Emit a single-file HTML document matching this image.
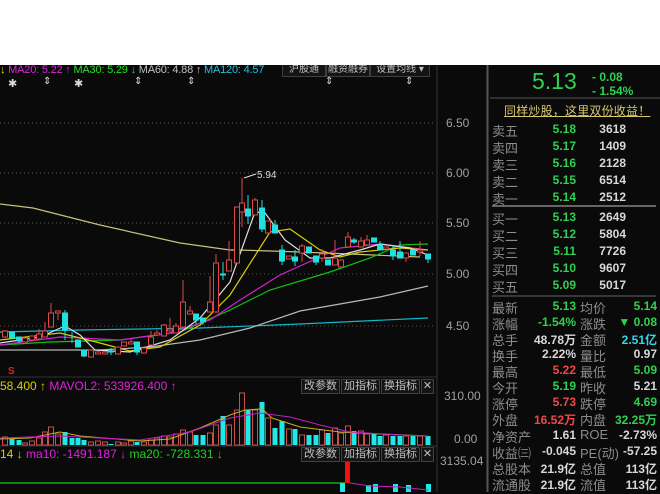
<!DOCTYPE html>
<html><head><meta charset="utf-8"><style>
body{margin:0;width:660px;height:492px;overflow:hidden;background:#0a0a0a;font-family:"Liberation Sans","Noto Sans CJK SC",sans-serif;position:relative}
.a{position:absolute;white-space:nowrap}
.top{position:absolute;left:0;top:0;width:660px;height:65px;background:#fff;z-index:5}
.ax{position:absolute;left:446px;color:#a0a0a0;font-size:12px}
.btn{position:absolute;height:13px;border:1px solid #404040;background:#141414;color:#c0c0c0;font-size:11px;line-height:13px;text-align:center;white-space:nowrap;overflow:hidden}
.l{position:absolute;left:492px;color:#8c8c8c;font-size:13px}
.l2{position:absolute;left:580px;color:#8c8c8c;font-size:13px}
.v{position:absolute;font-size:12px;font-weight:bold;text-align:right}
.g{color:#30d050}.w{color:#d8d8d8}.r{color:#f04848}.c{color:#30d8e8}
</style></head><body>
<div class="top"></div>
<div class="a" style="left:0;top:63px;font-size:11px;line-height:14px;letter-spacing:-0.2px"><span style="color:#e0e000">↓</span> <span style="color:#e020e0">MA20: 5.22 ↑</span> <span style="color:#20e020">MA30: 5.29 ↓</span> <span style="color:#c0c0c0">MA60: 4.88 ↑</span> <span style="color:#20c0e0">MA120: 4.57</span></div>
<div class="btn" style="left:282px;top:62px;width:42px;font-size:10px">沪股通</div>
<div class="btn" style="left:326px;top:62px;width:42px;font-size:10px">融资融券</div>
<div class="btn" style="left:370px;top:62px;width:58px;font-size:10px">设置均线 ▾</div>
<div class="a" style="left:8px;top:77px;color:#ddd;font-size:11px">✱</div>
<div class="a" style="left:74px;top:77px;color:#ddd;font-size:11px">✱</div>
<div class="a" style="left:43px;top:76px;color:#ddd;font-size:10px">⇕</div>
<div class="a" style="left:134px;top:76px;color:#ddd;font-size:10px">⇕</div>
<div class="a" style="left:187px;top:76px;color:#ddd;font-size:10px">⇕</div>
<div class="a" style="left:325px;top:76px;color:#ddd;font-size:10px">⇕</div>
<div class="a" style="left:405px;top:76px;color:#ddd;font-size:10px">⇕</div>

<svg class="a" style="left:0;top:0" width="660" height="492">
<g stroke="#555" stroke-dasharray="1,3">
<line x1="0" y1="123" x2="436" y2="123"/><line x1="0" y1="173" x2="436" y2="173"/><line x1="0" y1="223" x2="436" y2="223"/><line x1="0" y1="274" x2="436" y2="274"/><line x1="0" y1="326" x2="436" y2="326"/>
</g>
<line x1="437" y1="65" x2="437" y2="492" stroke="#333"/>
<line x1="487.5" y1="65" x2="487.5" y2="492" stroke="#555" stroke-width="2"/>
<line x1="0" y1="377" x2="437" y2="377" stroke="#333"/>
<line x1="0" y1="446" x2="437" y2="446" stroke="#333"/>
<g fill="none" stroke-width="1.2">
<polyline stroke="#c8c080" points="0,204 33,208 100,225 180,243 230,250 238,250 270,251 300,252 350,254 420,257"/>
<polyline stroke="#10b8c8" points="0,332 80,330 200,328 300,324 428,318"/>
<polyline stroke="#b8b8b8" points="0,350 100,350 150,347 200,340 250,328 300,311 380,297 428,286"/>
<polyline stroke="#10c010" points="0,345 50,342 120,340 180,332 230,310 270,290 330,272 370,258 400,245 428,244"/>
<polyline stroke="#d020d0" points="0,345 60,337 120,340 170,333 210,320 240,300 280,275 340,248 380,244 428,250"/>
<polyline stroke="#d8d000" points="0,340 60,333 100,343 130,351 160,347 200,325 230,295 270,232 290,229 320,250 340,257 360,252 400,248 428,250"/>
<polyline stroke="#e0e0e0" points="0,343 40,337 65,326 80,335 95,350 130,352 170,340 200,318 230,282 255,212 265,213 285,240 310,258 330,258 360,250 380,244 410,248 428,255"/>
</g>
<g stroke="#e04848" fill="#0a0a0a">
<path d="M5 330V338M25 338V342M32 336V340M39 329V339M45 322V337M51 303V327M58 311V320M91 350V357M98 351V354M105 352V354M118 347V354M124 342V346M131 339V344M144 348V353M151 331V345M157 330V336M164 324V336M170 318V331M176 323V333M183 280V327M190 306V314M210 276V312M216 254V312M229 241V271M237 207V263M242 178V227M255 198V215M268 221V233M289 256V259M302 244V262M322 249V262M335 240V265M341 260V267M348 232V247M361 237V247M367 235V245M386 247V249M406 253V262M420 241V256"/>
<rect x="2.5" y="331" width="5" height="6"/><rect x="22.5" y="338" width="5" height="4"/><rect x="29.5" y="336" width="5" height="4"/><rect x="36.5" y="334" width="5" height="5"/><rect x="42.5" y="331" width="5" height="6"/><rect x="48.5" y="313" width="5" height="14"/><rect x="55.5" y="311" width="5" height="2"/><rect x="88.5" y="350" width="5" height="7"/><rect x="95.5" y="352" width="5" height="2"/><rect x="102.5" y="352" width="5" height="2"/><rect x="115.5" y="347" width="5" height="7"/><rect x="121.5" y="342" width="5" height="4"/><rect x="128.5" y="342" width="5" height="2"/><rect x="141.5" y="348" width="5" height="5"/><rect x="148.5" y="337" width="5" height="8"/><rect x="154.5" y="333" width="5" height="2"/><rect x="161.5" y="325" width="5" height="11"/><rect x="167.5" y="329" width="5" height="2"/><rect x="173.5" y="326" width="5" height="7"/><rect x="180.5" y="302" width="5" height="25"/><rect x="187.5" y="311" width="5" height="3"/><rect x="207.5" y="302" width="5" height="10"/><rect x="213.5" y="263" width="5" height="49"/><rect x="226.5" y="260" width="5" height="11"/><rect x="234.5" y="207" width="5" height="56"/><rect x="239.5" y="203" width="5" height="9"/><rect x="252.5" y="200" width="5" height="15"/><rect x="265.5" y="221" width="5" height="12"/><rect x="286.5" y="256" width="5" height="3"/><rect x="299.5" y="246" width="5" height="7"/><rect x="319.5" y="254" width="5" height="4"/><rect x="332.5" y="258" width="5" height="7"/><rect x="338.5" y="260" width="5" height="7"/><rect x="345.5" y="237" width="5" height="10"/><rect x="358.5" y="241" width="5" height="6"/><rect x="364.5" y="240" width="5" height="5"/><rect x="383.5" y="247" width="5" height="2"/><rect x="403.5" y="253" width="5" height="5"/><rect x="417.5" y="250" width="5" height="2"/>
</g>
<g stroke="#20e0e0" fill="#20e0e0">
<path d="M12 332V338M19 337V343M65 310V340M72 332V343M78 340V347M84 350V357M111 348V355M137 342V355M196 314V324M203 318V325M223 262V280M248 195V224M262 200V232M275 220V233M282 245V265M295 250V266M309 247V253M316 256V265M328 260V265M354 238V244M374 238V242M380 241V250M393 246V260M400 241V258M413 250V255M428 254V263"/>
<rect x="9.5" y="332" width="5" height="6"/><rect x="16.5" y="337" width="5" height="4"/><rect x="62.5" y="313" width="5" height="17"/><rect x="75.5" y="340" width="5" height="7"/><rect x="81.5" y="350" width="5" height="6"/><rect x="108.5" y="351" width="5" height="1"/><rect x="134.5" y="342" width="5" height="10"/><rect x="193.5" y="314" width="5" height="6"/><rect x="200.5" y="318" width="5" height="4"/><rect x="220.5" y="274" width="5" height="1"/><rect x="245.5" y="209" width="5" height="7"/><rect x="259.5" y="208" width="5" height="21"/><rect x="272.5" y="225" width="5" height="8"/><rect x="279.5" y="250" width="5" height="11"/><rect x="292.5" y="257" width="5" height="4"/><rect x="306.5" y="247" width="5" height="6"/><rect x="313.5" y="256" width="5" height="6"/><rect x="325.5" y="260" width="5" height="5"/><rect x="351.5" y="240" width="5" height="2"/><rect x="371.5" y="238" width="5" height="4"/><rect x="377.5" y="245" width="5" height="5"/><rect x="390.5" y="250" width="5" height="6"/><rect x="397.5" y="252" width="5" height="6"/><rect x="410.5" y="250" width="5" height="5"/><rect x="425.5" y="254" width="5" height="5"/>
</g>
<line x1="244" y1="178" x2="256" y2="174" stroke="#ddd"/>
<text x="257" y="178" fill="#ddd" font-size="10" font-family="Liberation Sans">5.94</text>
<text x="8" y="374" fill="#e02020" font-size="10" font-weight="bold" font-family="Liberation Sans">S</text>
<g stroke="#c85050" fill="#0a0a0a">
<rect x="2.5" y="437" width="5" height="8"/><rect x="22.5" y="443" width="5" height="2"/><rect x="29.5" y="441" width="5" height="4"/><rect x="36.5" y="438" width="5" height="7"/><rect x="42.5" y="432" width="5" height="13"/><rect x="48.5" y="427" width="5" height="18"/><rect x="55.5" y="434" width="5" height="11"/><rect x="88.5" y="442" width="5" height="3"/><rect x="95.5" y="441" width="5" height="4"/><rect x="102.5" y="442" width="5" height="3"/><rect x="115.5" y="442" width="5" height="3"/><rect x="121.5" y="443" width="5" height="2"/><rect x="128.5" y="441" width="5" height="4"/><rect x="141.5" y="442" width="5" height="3"/><rect x="148.5" y="440" width="5" height="5"/><rect x="154.5" y="438" width="5" height="7"/><rect x="161.5" y="436" width="5" height="9"/><rect x="167.5" y="437" width="5" height="8"/><rect x="173.5" y="434" width="5" height="11"/><rect x="180.5" y="430" width="5" height="15"/><rect x="187.5" y="432" width="5" height="13"/><rect x="207.5" y="433" width="5" height="12"/><rect x="213.5" y="425" width="5" height="20"/><rect x="226.5" y="425" width="5" height="20"/><rect x="234.5" y="410" width="5" height="35"/><rect x="239.5" y="393" width="5" height="52"/><rect x="252.5" y="410" width="5" height="35"/><rect x="265.5" y="418" width="5" height="27"/><rect x="286.5" y="429" width="5" height="16"/><rect x="299.5" y="435" width="5" height="10"/><rect x="319.5" y="430" width="5" height="15"/><rect x="332.5" y="428" width="5" height="17"/><rect x="338.5" y="433" width="5" height="12"/><rect x="345.5" y="426" width="5" height="19"/><rect x="358.5" y="431" width="5" height="14"/><rect x="364.5" y="434" width="5" height="11"/><rect x="383.5" y="435" width="5" height="10"/><rect x="403.5" y="436" width="5" height="9"/><rect x="417.5" y="436" width="5" height="9"/>
</g>
<g fill="#20e8e8">
<rect x="9.5" y="439" width="5" height="6"/><rect x="16.5" y="440" width="5" height="5"/><rect x="62.5" y="432" width="5" height="13"/><rect x="69.5" y="438" width="5" height="7"/><rect x="75.5" y="438" width="5" height="7"/><rect x="81.5" y="440" width="5" height="5"/><rect x="108.5" y="444" width="5" height="1"/><rect x="134.5" y="442" width="5" height="3"/><rect x="193.5" y="435" width="5" height="10"/><rect x="200.5" y="435" width="5" height="10"/><rect x="220.5" y="416" width="5" height="29"/><rect x="245.5" y="410" width="5" height="35"/><rect x="259.5" y="402" width="5" height="43"/><rect x="272.5" y="428" width="5" height="17"/><rect x="279.5" y="421" width="5" height="24"/><rect x="292.5" y="429" width="5" height="16"/><rect x="306.5" y="435" width="5" height="10"/><rect x="313.5" y="435" width="5" height="10"/><rect x="325.5" y="433" width="5" height="12"/><rect x="351.5" y="431" width="5" height="14"/><rect x="371.5" y="433" width="5" height="12"/><rect x="377.5" y="436" width="5" height="9"/><rect x="390.5" y="436" width="5" height="9"/><rect x="397.5" y="436" width="5" height="9"/><rect x="410.5" y="436" width="5" height="9"/><rect x="425.5" y="436" width="5" height="9"/>
</g>
<g fill="none" stroke-width="1.1">
<polyline stroke="#c0b020" points="0,439 30,438 60,432 80,436 140,441 170,439 200,428 230,415 245,410 262,409 272,418 300,427 340,432 380,434 428,436"/>
<polyline stroke="#c020c0" points="0,438 60,436 140,440 190,432 230,418 260,413 290,417 320,425 350,432 400,435 428,436"/>
</g>
<line x1="0" y1="483" x2="345" y2="483" stroke="#10b010" stroke-width="1.5"/>
<rect x="345" y="461" width="5" height="22" fill="#f01010"/>
<g fill="#20e8e8"><rect x="340" y="483" width="5" height="9"/><rect x="366" y="485" width="5" height="7"/><rect x="373" y="484" width="5" height="8"/><rect x="393" y="484" width="5" height="8"/><rect x="406" y="485" width="5" height="7"/><rect x="426" y="484" width="5" height="8"/></g>
<polyline fill="none" stroke="#c020c0" points="350,483 370,486 400,487 428,490"/>
<line x1="490" y1="98" x2="660" y2="98" stroke="#555"/>
<line x1="492" y1="206" x2="656" y2="206" stroke="#666" stroke-width="2"/>
<line x1="492" y1="296" x2="656" y2="296" stroke="#666"/>
</svg>

<div class="ax" style="top:116px">6.50</div>
<div class="ax" style="top:166px">6.00</div>
<div class="ax" style="top:216px">5.50</div>
<div class="ax" style="top:267px">5.00</div>
<div class="ax" style="top:319px">4.50</div>
<div class="ax" style="top:389px;left:444px">310.00</div>
<div class="ax" style="top:432px;left:454px">0.00</div>
<div class="ax" style="top:454px;left:440px">3135.04</div>

<div class="a" style="left:0;top:379px;font-size:12px"><span style="color:#d8d000">58.400 ↑</span> <span style="color:#e020e0">MAVOL2: 533926.400 ↑</span></div>
<div class="btn" style="left:301px;top:379px;width:37px">改参数</div>
<div class="btn" style="left:341px;top:379px;width:37px">加指标</div>
<div class="btn" style="left:381px;top:379px;width:37px">换指标</div>
<div class="btn" style="left:421px;top:379px;width:11px">✕</div>
<div class="a" style="left:0;top:447px;font-size:12px"><span style="color:#d8d000">14 ↓</span> <span style="color:#e020e0">ma10: -1491.187 ↓</span> <span style="color:#20d020">ma20: -728.331 ↓</span></div>
<div class="btn" style="left:301px;top:447px;width:37px">改参数</div>
<div class="btn" style="left:341px;top:447px;width:37px">加指标</div>
<div class="btn" style="left:381px;top:447px;width:37px">换指标</div>
<div class="btn" style="left:421px;top:447px;width:11px">✕</div>

<div class="a g" style="left:532px;top:68px;font-size:23px">5.13</div>
<div class="a g" style="left:592px;top:70px;font-size:12px;font-weight:bold">- 0.08</div>
<div class="a g" style="left:592px;top:84px;font-size:12px;font-weight:bold">- 1.54%</div>
<div class="a" style="left:504px;top:102px;font-size:12px;letter-spacing:0.2px;color:#d8c870;text-decoration:underline">同样炒股，这里双份收益！</div>

<div class="l" style="top:121px">卖五</div><div class="v g" style="left:540px;width:36px;top:122px">5.18</div><div class="v w" style="left:590px;width:36px;top:122px">3618</div>
<div class="l" style="top:138px">卖四</div><div class="v g" style="left:540px;width:36px;top:139px">5.17</div><div class="v w" style="left:590px;width:36px;top:139px">1409</div>
<div class="l" style="top:155px">卖三</div><div class="v g" style="left:540px;width:36px;top:156px">5.16</div><div class="v w" style="left:590px;width:36px;top:156px">2128</div>
<div class="l" style="top:172px">卖二</div><div class="v g" style="left:540px;width:36px;top:173px">5.15</div><div class="v w" style="left:590px;width:36px;top:173px">6514</div>
<div class="l" style="top:189px">卖一</div><div class="v g" style="left:540px;width:36px;top:190px">5.14</div><div class="v w" style="left:590px;width:36px;top:190px">2512</div>
<div class="l" style="top:209px">买一</div><div class="v g" style="left:540px;width:36px;top:210px">5.13</div><div class="v w" style="left:590px;width:36px;top:210px">2649</div>
<div class="l" style="top:226px">买二</div><div class="v g" style="left:540px;width:36px;top:227px">5.12</div><div class="v w" style="left:590px;width:36px;top:227px">5804</div>
<div class="l" style="top:243px">买三</div><div class="v g" style="left:540px;width:36px;top:244px">5.11</div><div class="v w" style="left:590px;width:36px;top:244px">7726</div>
<div class="l" style="top:260px">买四</div><div class="v g" style="left:540px;width:36px;top:261px">5.10</div><div class="v w" style="left:590px;width:36px;top:261px">9607</div>
<div class="l" style="top:277px">买五</div><div class="v g" style="left:540px;width:36px;top:278px">5.09</div><div class="v w" style="left:590px;width:36px;top:278px">5017</div>

<div class="l" style="top:298px">最新</div><div class="v g" style="left:520px;width:56px;top:299px">5.13</div><div class="l2" style="top:298px">均价</div><div class="v g" style="left:600px;width:57px;top:299px">5.14</div>
<div class="l" style="top:314px">涨幅</div><div class="v g" style="left:520px;width:56px;top:315px">-1.54%</div><div class="l2" style="top:314px">涨跌</div><div class="v g" style="left:600px;width:57px;top:315px">▼ 0.08</div>
<div class="l" style="top:330px">总手</div><div class="v w" style="left:520px;width:56px;top:331px">48.78万</div><div class="l2" style="top:330px">金额</div><div class="v c" style="left:600px;width:57px;top:331px">2.51亿</div>
<div class="l" style="top:346px">换手</div><div class="v w" style="left:520px;width:56px;top:347px">2.22%</div><div class="l2" style="top:346px">量比</div><div class="v w" style="left:600px;width:57px;top:347px">0.97</div>
<div class="l" style="top:362px">最高</div><div class="v r" style="left:520px;width:56px;top:363px">5.22</div><div class="l2" style="top:362px">最低</div><div class="v g" style="left:600px;width:57px;top:363px">5.09</div>
<div class="l" style="top:378px">今开</div><div class="v g" style="left:520px;width:56px;top:379px">5.19</div><div class="l2" style="top:378px">昨收</div><div class="v w" style="left:600px;width:57px;top:379px">5.21</div>
<div class="l" style="top:394px">涨停</div><div class="v r" style="left:520px;width:56px;top:395px">5.73</div><div class="l2" style="top:394px">跌停</div><div class="v g" style="left:600px;width:57px;top:395px">4.69</div>
<div class="l" style="top:410px">外盘</div><div class="v r" style="left:510px;width:66px;top:411px">16.52万</div><div class="l2" style="top:410px">内盘</div><div class="v g" style="left:590px;width:67px;top:411px">32.25万</div>
<div class="l" style="top:427px">净资产</div><div class="v w" style="left:520px;width:56px;top:428px">1.61</div><div class="l2" style="top:427px">ROE</div><div class="v w" style="left:600px;width:57px;top:428px">-2.73%</div>
<div class="l" style="top:443px">收益㈢</div><div class="v w" style="left:520px;width:56px;top:444px">-0.045</div><div class="l2" style="top:443px">PE(动)</div><div class="v w" style="left:600px;width:57px;top:444px">-57.25</div>
<div class="l" style="top:459px">总股本</div><div class="v w" style="left:520px;width:56px;top:460px">21.9亿</div><div class="l2" style="top:459px">总值</div><div class="v w" style="left:600px;width:57px;top:460px">113亿</div>
<div class="l" style="top:475px">流通股</div><div class="v w" style="left:520px;width:56px;top:476px">21.9亿</div><div class="l2" style="top:475px">流值</div><div class="v w" style="left:600px;width:57px;top:476px">113亿</div>
</body></html>
